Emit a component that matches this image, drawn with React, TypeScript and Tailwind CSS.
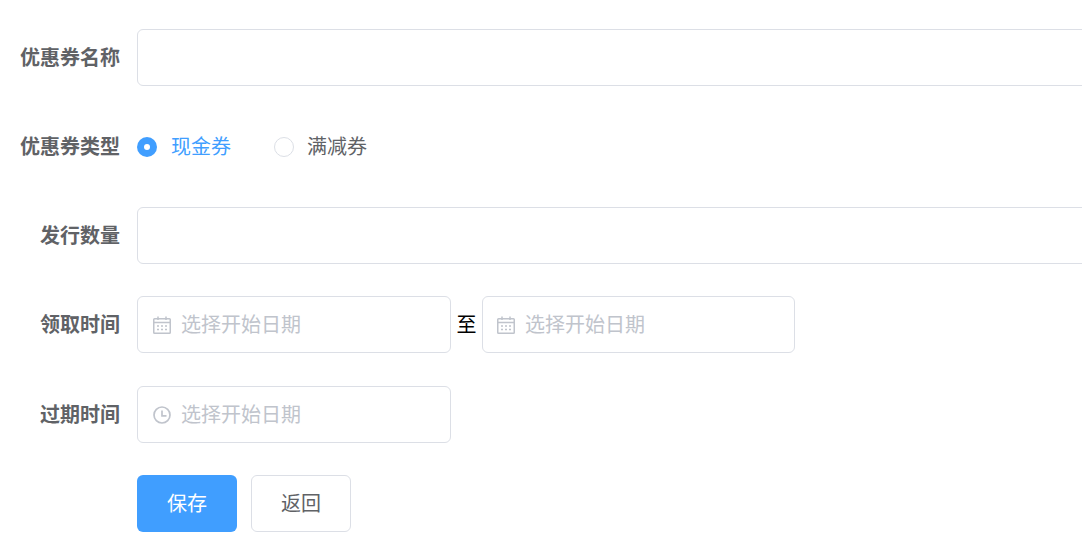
import { ReactNode } from "react";

function Row({ label, children, className }: { label: string; children: ReactNode; className: string }) {
  return (
    <div className={`flex items-center ${className}`}>
      <label className="w-[120px] shrink-0 text-right text-[20px] font-bold text-[#606266]">{label}</label>
      <div className="ml-[17px] flex min-w-0 flex-1 items-center">{children}</div>
    </div>
  );
}

function CalendarIcon() {
  return (
    <svg width="18" height="18" viewBox="0 0 18 18" fill="none" stroke="#c0c4cc" strokeWidth="1.5" className="shrink-0">
      <rect x="0.75" y="2.75" width="16.5" height="14.5" rx="0.8" />
      <path d="M1 6.5h16M5 0.5v3.5M13 0.5v3.5" />
      <path d="M4 10h2M8 10h2M12 10h2M4 13.5h2M8 13.5h2M12 13.5h2" strokeWidth="1.5" />
    </svg>
  );
}

function ClockIcon() {
  return (
    <svg width="18" height="18" viewBox="0 0 18 18" fill="none" stroke="#c0c4cc" strokeWidth="1.7" className="shrink-0">
      <circle cx="9" cy="9" r="8" />
      <path d="M9 4.5V9.8H13.5" />
    </svg>
  );
}

function DateInput({ icon, className, gap }: { icon: ReactNode; className: string; gap: string }) {
  return (
    <div className={`flex h-[57px] shrink-0 items-center rounded-[6px] border border-[#dcdfe6] bg-white ${className}`}>
      {icon}
      <span className={`pt-[1px] text-[20px] text-[#c0c4cc] ${gap}`}>选择开始日期</span>
    </div>
  );
}

export default function App() {
  return (
    <div className="h-[560px] w-[1082px] overflow-hidden bg-white pt-[29px] font-['Liberation_Sans','Noto_Sans_CJK_SC',sans-serif]">
      <Row label="优惠券名称" className="h-[57px]">
        <div className="h-[57px] w-[1000px] shrink-0 rounded-[6px] border border-[#dcdfe6] bg-white" />
      </Row>
      <Row label="优惠券类型" className="mt-[32px] h-[57px]">
        <div className="flex items-center">
          <span className="flex h-[20px] w-[20px] items-center justify-center rounded-full bg-[#409eff]">
            <span className="h-[6px] w-[6px] rounded-full bg-white" />
          </span>
          <span className="ml-[14px] text-[20px] text-[#409eff]">现金券</span>
        </div>
        <div className="ml-[43px] flex items-center">
          <span className="h-[20px] w-[20px] rounded-full border border-[#dcdfe6] bg-white" />
          <span className="ml-[13px] text-[20px] text-[#606266]">满减券</span>
        </div>
      </Row>
      <Row label="发行数量" className="mt-[32px] h-[57px]">
        <div className="h-[57px] w-[1000px] shrink-0 rounded-[6px] border border-[#dcdfe6] bg-white" />
      </Row>
      <Row label="领取时间" className="mt-[32px] h-[57px]">
        <DateInput icon={<CalendarIcon />} className="w-[314px] pl-[15px]" gap="ml-[10px]" />
        <span className="w-[31px] shrink-0 text-center text-[20px] text-black">至</span>
        <DateInput icon={<CalendarIcon />} className="w-[313px] pl-[14px]" gap="ml-[10px]" />
      </Row>
      <Row label="过期时间" className="mt-[33px] h-[57px]">
        <DateInput icon={<ClockIcon />} className="w-[314px] pl-[15px]" gap="ml-[10px]" />
      </Row>
      <div className="mt-[32px] ml-[137px] flex">
        <button className="h-[57px] w-[100px] rounded-[6px] bg-[#409eff] text-[20px] text-white">保存</button>
        <button className="ml-[14px] h-[57px] w-[100px] rounded-[6px] border border-[#dcdfe6] bg-white text-[20px] text-[#606266]">返回</button>
      </div>
    </div>
  );
}
